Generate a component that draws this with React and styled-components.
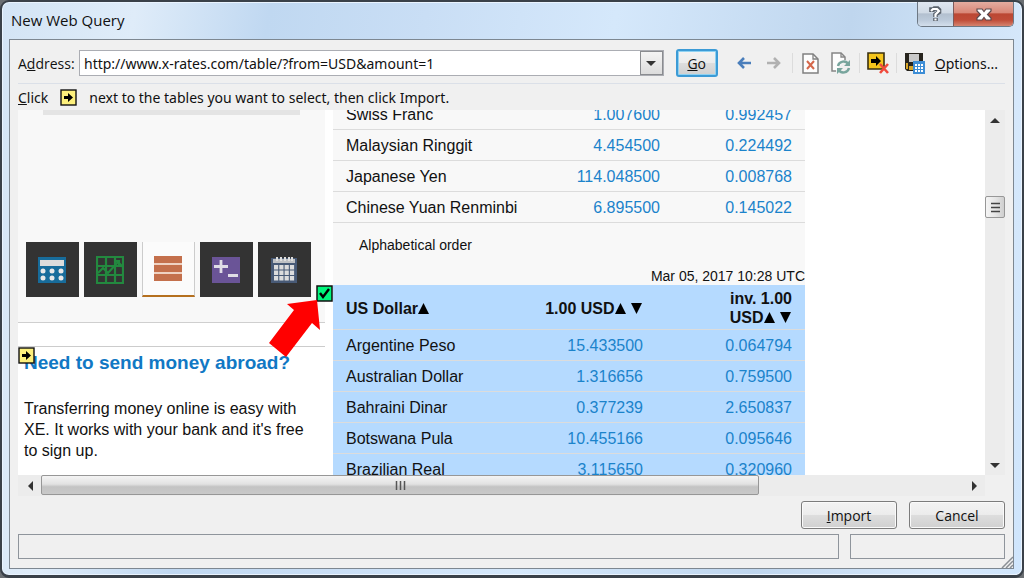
import React from 'react';
import styled, { createGlobalStyle, css } from 'styled-components';

const GlobalStyle = createGlobalStyle`
  * {
    box-sizing: border-box;
  }
  body {
    margin: 0;
    background: #6b6f73;
    font-family: "Noto Sans", "Open Sans", sans-serif;
    color: #111;
  }
`;

const Window = styled.div`
  height: 100vh;
  min-height: 420px;
  display: flex;
  flex-direction: column;
  padding: 0 8px 6px 7px;
  border: 2px solid #3a4149;
  border-bottom-width: 3px;
  border-radius: 9px;
  background: linear-gradient(100deg, #d3e4f5 0%, #dfecf9 12%, #c0d8f1 24%, #c9def5 38%, #d5e8fb 55%, #bfd6ee 76%, #d6e8fb 92%, #cfe5fc 100%);
  box-shadow: inset 0 0 0 1px #eaf4ff;
`;

const TitleBar = styled.header`
  display: flex;
  justify-content: space-between;
  align-items: flex-start;
  height: 37px;
`;

const Title = styled.h1`
  margin: 0;
  padding-left: 2px;
  font: 400 15px/36px "Open Sans", "Noto Sans", sans-serif;
`;

const Caption = styled.div`
  display: flex;
  height: 25px;
  border: 1px solid #6d7884;
  border-top: 0;
  border-radius: 0 0 5px 5px;
  overflow: hidden;
`;

const CaptionButton = styled.button`
  display: flex;
  align-items: center;
  justify-content: center;
  width: ${({ $close }) => ($close ? 60 : 35)}px;
  padding: 0;
  border: 0;
  border-left: ${({ $close }) => ($close ? '1px solid #7d5a5a' : '0')};
  background: ${({ $close }) =>
    $close
      ? 'linear-gradient(#e3aca0, #d98878 44%, #bb4733 50%, #c04c38 75%, #d5836f)'
      : 'linear-gradient(#dfe7f0, #d0dae5 44%, #b3c0cf 50%, #bccada 75%, #d3dfec)'};
`;

const Panel = styled.main`
  flex: 1;
  min-height: 0;
  position: relative;
  display: flex;
  flex-direction: column;
  padding: 9px 8px 9px;
  border: 1px solid #7d8791;
  background: #f0f0f0;
`;

const Toolbar = styled.div`
  display: flex;
  align-items: center;
  height: 28px;
  font-size: 14px;
`;

const AddressLabel = styled.label`
  width: 61px;
  font-family: "Open Sans", "Noto Sans", sans-serif;
`;

const Combo = styled.div`
  flex: 1;
  display: flex;
  height: 26px;
  border: 1px solid #abadb3;
  background: #fff;
`;

const Address = styled.input`
  flex: 1;
  min-width: 0;
  padding: 0 4px;
  border: 0;
  outline: 0;
  background: transparent;
  color: #111;
  font: 14px "Noto Sans", "Open Sans", sans-serif;
`;

const DropButton = styled.button`
  display: flex;
  align-items: center;
  justify-content: center;
  width: 23px;
  padding: 0;
  border: 1px solid #8a8c90;
  background: linear-gradient(#f4f4f4, #dcdcdc);
`;

const PushButton = styled.button`
  height: 28px;
  width: ${({ $go }) => ($go ? 42 : 96)}px;
  margin-left: ${({ $go }) => ($go ? 12 : 0)}px;
  padding: 0;
  border: ${({ $go }) => ($go ? '2px solid #3c9bd6' : '1px solid #7c7c7c')};
  border-radius: 3px;
  background: linear-gradient(#f3f3f3, #ececec 48%, #dddddd 52%, #d0d0d0);
  box-shadow: inset 0 0 0 1px ${({ $go }) => ($go ? '#8fd2f2' : '#fafafa')};
  color: #111;
  font: 14px "Open Sans", "Noto Sans", sans-serif;
`;

const Tools = styled.div`
  display: flex;
  align-items: center;
  padding-left: 11px;
`;

const ToolButton = styled.button`
  display: flex;
  align-items: center;
  justify-content: center;
  width: 30px;
  height: 28px;
  padding: 0;
  border: 0;
  background: none;
`;

const Separator = styled.span`
  width: 1px;
  height: 20px;
  margin: 0 3px;
  background: #dcdcdc;
`;

const OptionsButton = styled.button`
  height: 28px;
  padding: 0 7px 0 5px;
  border: 0;
  background: none;
  color: #111;
  font: 14px "Noto Sans", "Open Sans", sans-serif;
`;

const Hint = styled.p`
  display: flex;
  align-items: center;
  height: 27px;
  margin: 6px 0 0;
  border-top: 1px solid #dbe0e8;
  font-size: 14px;
  svg {
    margin: 0 12px;
  }
`;

const Browser = styled.div`
  flex: 1;
  min-height: 0;
  display: grid;
  grid-template-columns: minmax(0, 1fr) 20px;
  grid-template-rows: minmax(0, 1fr) 21px;
`;

const Page = styled.div`
  display: flex;
  align-items: flex-start;
  gap: 8px;
  overflow: hidden;
  background: #fff;
  font-family: "Liberation Sans", Arial, sans-serif;
  font-size: 16px;
`;

const Sidebar = styled.aside`
  flex: none;
  width: 307px;
`;

const ToolCard = styled.section`
  height: 213px;
  padding: 0 25px;
  border-bottom: 1px solid #cfcfcf;
  background: #f8f8f8;
`;

const AdEdge = styled.div`
  height: 5px;
  background: #e4e4e4;
`;

const IconRow = styled.nav`
  display: flex;
  gap: 5px;
  margin: 127px -17px 0;
`;

const IconTile = styled.a`
  display: flex;
  align-items: center;
  justify-content: center;
  width: 53px;
  height: 55px;
  padding-right: 2px;
  background: #333;
  ${({ $active }) =>
    $active &&
    css`
      border: 1px solid #ccc;
      border-top: 0;
      border-bottom: 2px solid #b5701f;
      background: #fbfbfb;
    `}
`;

const Promo = styled.section`
  position: relative;
  margin-top: 23px;
  padding: 5px 8px 0 6px;
  border-top: 1px solid #ccc;
`;

const PromoTitle = styled.h2`
  margin: 0;
  color: #1178c4;
  font-size: 19px;
  line-height: 22px;
  white-space: nowrap;
`;

const PromoText = styled.p`
  margin: 24px 0 0;
  line-height: 21px;
`;

const PromoMark = styled.span`
  position: absolute;
  top: 0;
  left: 0;
  line-height: 0;
`;

const Rates = styled.section`
  position: relative;
  flex: none;
  width: 472px;
  margin-top: -11px;
  background: #f8f8f8;
`;

const RateTable = styled.table`
  width: 100%;
  border-collapse: separate;
  border-spacing: 0;
  table-layout: fixed;
  background: ${({ $selected }) => ($selected ? '#b5daff' : '#f8f8f8')};
  td,
  th {
    height: 31px;
    padding: 2px 13px 0 13px;
    border-bottom: 1px solid #dcdcdc;
    text-align: right;
    white-space: nowrap;
  }
  td:first-child,
  th:first-child {
    text-align: left;
  }
  th {
    height: 45px;
    line-height: 19px;
    white-space: normal;
  }
`;

const RateLink = styled.a`
  color: #1b83cb;
  text-decoration: none;
`;

const ListIntro = styled.div`
  display: flex;
  flex-direction: column;
  justify-content: space-between;
  height: 62px;
  padding-top: 13px;
  font-size: 14px;
  line-height: 18px;
`;

const ListName = styled.span`
  padding-left: 26px;
`;

const Stamp = styled.time`
  text-align: right;
`;

const TableMark = styled.label`
  position: absolute;
  top: 186px;
  left: -17px;
  width: 17px;
  height: 17px;
  line-height: 0;
  input {
    position: absolute;
    inset: 0;
    margin: 0;
    opacity: 0;
  }
`;

const Pointer = styled.svg`
  position: absolute;
  top: 194px;
  left: -65px;
`;

const ScrollBar = styled.div`
  display: flex;
  flex-direction: ${({ $vertical }) => ($vertical ? 'column' : 'row')};
  align-items: stretch;
  background: #ececec;
`;

const ScrollArrow = styled.button`
  flex: none;
  display: flex;
  align-items: center;
  justify-content: center;
  width: ${({ $small }) => ($small ? 20 : 23)}px;
  height: 21px;
  padding: 0;
  border: 0;
  background: none;
`;

const ScrollTrack = styled.div`
  flex: 1;
  display: flex;
  flex-direction: ${({ $vertical }) => ($vertical ? 'column' : 'row')};
  padding-top: ${({ $vertical }) => ($vertical ? '65px' : '0')};
`;

const Thumb = styled.div`
  display: flex;
  align-items: center;
  justify-content: center;
  width: ${({ $vertical }) => ($vertical ? '20px' : '78%')};
  height: ${({ $vertical }) => ($vertical ? '22px' : '20px')};
  border: 1px solid #979797;
  border-radius: 2px;
  background: ${({ $vertical }) =>
    $vertical ? 'linear-gradient(90deg, #f5f5f5, #e6e6e6 50%, #cfcfcf)' : 'linear-gradient(#f4f4f4, #e2e2e2 45%, #c3c3c3 60%, #c9c9c9)'};
`;

const Actions = styled.div`
  display: flex;
  justify-content: flex-end;
  gap: 12px;
  margin: 5px 0 5px;
`;

const StatusRow = styled.footer`
  display: flex;
  gap: 11px;
`;

const StatusBox = styled.div`
  flex: ${({ $small }) => ($small ? '0 0 155px' : '1')};
  height: 25px;
  border: 1px solid #8f959c;
`;

const Grip = styled.svg`
  position: absolute;
  right: 0;
  bottom: 0;
`;

const topRates = [
  ['Swiss Franc', '1.007600', '0.992457'],
  ['Malaysian Ringgit', '4.454500', '0.224492'],
  ['Japanese Yen', '114.048500', '0.008768'],
  ['Chinese Yuan Renminbi', '6.895500', '0.145022'],
];

const allRates = [
  ['Argentine Peso', '15.433500', '0.064794'],
  ['Australian Dollar', '1.316656', '0.759500'],
  ['Bahraini Dinar', '0.377239', '2.650837'],
  ['Botswana Pula', '10.455166', '0.095646'],
  ['Brazilian Real', '3.115650', '0.320960'],
];

const MarkIcon = () => (
  <svg width="17" height="17" viewBox="0 0 17 17">
    <rect x="1" y="1" width="15" height="15" fill="#fdf07c" stroke="#111" strokeWidth="1.4" />
    <path d="M4 7h4V4l5 4.500-5 4.500v-3H4z" fill="#000" />
  </svg>
);

const CalculatorIcon = () => (
  <svg width="28" height="26" viewBox="0 0 28 26">
    <path d="M0 0h28v26H0z" fill="#176c9b" />
    <path d="M2 3h24v6H2z" fill="#dcdcdc" />
    {[5, 14, 23].map((x) => [14, 21].map((y) => <circle key={`${x}-${y}`} cx={x} cy={y} r="2.500" fill="#e8e8e8" />))}
  </svg>
);

const GraphIcon = () => (
  <svg width="28" height="28" viewBox="0 0 28 28" fill="none" stroke="#23893f">
    <path d="M1 1h26v26H1zM10 1v26M19 1v26M1 10h26M1 19h26" strokeWidth="2.200" />
    <path d="M2 17l5-5 5 5 10-11M18 5h5v5M22 6l5 5" strokeWidth="2.200" />
  </svg>
);

const TableIcon = () => (
  <svg width="28" height="26" viewBox="0 0 28 26">
    <path d="M0 0h28v25H0z" fill="#efd2c2" />
    <path d="M0 0h28v7H0zM0 9h28v7H0zM0 18h28v7H0z" fill="#c4704c" />
  </svg>
);

const PlusMinusIcon = () => (
  <svg width="28" height="26" viewBox="0 0 28 26">
    <path d="M0 0h28v26H0z" fill="#6a5497" />
    <path d="M9 3v13M2 9.500h14M16 18.500h10" fill="none" stroke="#e0dde6" strokeWidth="2.800" />
  </svg>
);

const CalendarIcon = () => (
  <svg width="26" height="26" viewBox="0 0 26 26">
    <path d="M0 1h26v25H0z" fill="#485a76" />
    <path d="M2 2h22v4H2z" fill="#bfc1c4" />
    <path d="M6 0v4M10 0v4M14 0v4M18 0v4M21 0v4" stroke="#dedede" strokeWidth="2" />
    {[3, 8.300, 13.600, 18.900].map((x) => [8, 13.500, 19].map((y) => <rect key={`${x}-${y}`} x={x} y={y} width="4.200" height="4.500" fill="#dcdcdc" />))}
  </svg>
);

const ArrowIcon = ({ color, forward }) => (
  <svg width="14" height="12" viewBox="0 0 14 12" fill="none" stroke={color} strokeWidth="2.600">
    <path d={forward ? 'M0 6h12M7 1l5 5-5 5' : 'M14 6H2M7 1L2 6l5 5'} />
  </svg>
);

const StopPageIcon = () => (
  <svg width="17" height="21" viewBox="0 0 17 21" fill="none">
    <path d="M1 1h10l5 5v14H1z" fill="#fdfdfd" stroke="#808080" strokeWidth="1.500" />
    <path d="M11 1v5h5" stroke="#808080" strokeWidth="1.300" />
    <path d="M5 8l7 8M12 8l-7 8" stroke="#d5674a" strokeWidth="2" />
  </svg>
);

const RefreshPageIcon = () => (
  <svg width="20" height="22" viewBox="0 0 20 22" fill="none">
    <path d="M5 19H1V1h9l4 4v3" fill="#fdfdfd" stroke="#858585" strokeWidth="1.500" />
    <path d="M10 1v4h4" stroke="#858585" strokeWidth="1.300" />
    <path d="M7 14c1-5 8-6 10-2M18 16c-1 5-8 6-10 2" stroke="#78a59d" strokeWidth="2.400" />
    <path d="M19 8v6h-6zM6 22v-6h6z" fill="#78a59d" />
  </svg>
);

const HideMarksIcon = () => (
  <svg width="22" height="22" viewBox="0 0 22 22" fill="none">
    <path d="M1 1h16v16H1z" fill="#f5c51c" stroke="#3a3010" strokeWidth="1.600" />
    <path d="M4 7h5V4l5 5-5 5v-3H4z" fill="#000" />
    <path d="M13 12l8 9M21 12l-8 9" stroke="#f04a3c" strokeWidth="2.600" />
  </svg>
);

const SaveQueryIcon = () => (
  <svg width="20" height="21" viewBox="0 0 20 21">
    <path d="M0 0h18v18H2l-2-2z" fill="#27241e" />
    <path d="M4 1h10v8H4z" fill="#c9c9c9" />
    <path d="M1 10h2v6H1zM4 13h4v4H4z" fill="#d8a62a" />
    <path d="M8 8h12v13H8z" fill="#3e8ed6" />
    <path d="M10 11h8v8h-8z" fill="#fff" />
    <path d="M12.500 11v8M15.500 11v8M10 13.500h8M10 16.500h8" stroke="#3e8ed6" />
  </svg>
);

const Triangle = ({ d }) => (
  <svg width="10" height="10" viewBox="0 0 10 10">
    <path d={d} fill="#333" />
  </svg>
);

const SortIcon = ({ down }) => (
  <svg width="12" height="11" viewBox="0 0 12 11">
    <path d={down ? 'M0 0h11L5.500 11z' : 'M0 11h11L5.500 0z'} fill="#000" />
  </svg>
);

const RateRows = ({ rates }) =>
  rates.map(([name, value, inverse]) => (
    <tr key={name}>
      <td>{name}</td>
      <td>
        <RateLink href="#">{value}</RateLink>
      </td>
      <td>
        <RateLink href="#">{inverse}</RateLink>
      </td>
    </tr>
  ));

const App = () => {
  return (
    <>
      <GlobalStyle />
      <Window>
        <TitleBar>
          <Title>New Web Query</Title>
          <Caption>
            <CaptionButton aria-label="Help">
              <svg width="13" height="16" viewBox="0 0 13 16" fill="none">
                <path d="M2.500 6V3.500h2l1-1h3l1.500 1.500v2L6.500 8.500v2.500M6.500 12v3" stroke="#59616b" strokeWidth="4.600" />
                <path d="M2 5l2-2h4l2 2-3.500 3.500V11M6.500 12.500v2" stroke="#fff" strokeWidth="2.200" />
              </svg>
            </CaptionButton>
            <CaptionButton $close aria-label="Close">
              <svg width="16" height="13" viewBox="0 0 16 13">
                <path d="M1 1h5l2 2.500L10 1h5v2l-3.500 3.500L15 10v2h-5L8 9.500 6 12H1v-2l3.500-3.500L1 3z" fill="#fff" stroke="#5b4a4e" strokeWidth="1.200" />
              </svg>
            </CaptionButton>
          </Caption>
        </TitleBar>
        <Panel>
          <Toolbar>
            <AddressLabel htmlFor="address">
              A<u>d</u>dress:
            </AddressLabel>
            <Combo>
              <Address id="address" type="text" defaultValue="http://www.x-rates.com/table/?from=USD&amount=1" />
              <DropButton aria-label="Show addresses">
                <Triangle d="M0 3h10L5 8z" />
              </DropButton>
            </Combo>
            <PushButton $go>
              <u>G</u>o
            </PushButton>
            <Tools>
              <ToolButton aria-label="Back"><ArrowIcon color="#4a7ebb" /></ToolButton>
              <ToolButton aria-label="Forward"><ArrowIcon color="#b1b1b1" forward /></ToolButton>
              <Separator />
              <ToolButton aria-label="Stop"><StopPageIcon /></ToolButton>
              <ToolButton aria-label="Refresh"><RefreshPageIcon /></ToolButton>
              <Separator />
              <ToolButton aria-label="Hide icons"><HideMarksIcon /></ToolButton>
              <Separator />
              <ToolButton aria-label="Save query"><SaveQueryIcon /></ToolButton>
              <OptionsButton>
                <u>O</u>ptions...
              </OptionsButton>
            </Tools>
          </Toolbar>
          <Hint>
            <u>C</u>lick
            <MarkIcon />
            next to the tables you want to select, then click Import.
          </Hint>
          <Browser>
            <Page>
              <Sidebar>
                <ToolCard>
                  <AdEdge />
                  <IconRow>
                    <IconTile href="#" aria-label="Calculator"><CalculatorIcon /></IconTile>
                    <IconTile href="#" aria-label="Graph"><GraphIcon /></IconTile>
                    <IconTile href="#" aria-label="Rates table" $active><TableIcon /></IconTile>
                    <IconTile href="#" aria-label="Monthly average"><PlusMinusIcon /></IconTile>
                    <IconTile href="#" aria-label="Historic lookup"><CalendarIcon /></IconTile>
                  </IconRow>
                </ToolCard>
                <Promo>
                  <PromoTitle>Need to send money abroad?</PromoTitle>
                  <PromoText>Transferring money online is easy with XE. It works with your bank and it's free to sign up.</PromoText>
                  <PromoMark><MarkIcon /></PromoMark>
                </Promo>
              </Sidebar>
              <Rates>
                <RateTable>
                  <colgroup>
                    <col />
                    <col width="130" />
                    <col width="132" />
                  </colgroup>
                  <tbody>
                    <RateRows rates={topRates} />
                  </tbody>
                </RateTable>
                <ListIntro>
                  <ListName>Alphabetical order</ListName>
                  <Stamp>Mar 05, 2017 10:28 UTC</Stamp>
                </ListIntro>
                <RateTable $selected>
                  <colgroup>
                    <col />
                    <col width="130" />
                    <col width="149" />
                  </colgroup>
                  <thead>
                    <tr>
                      <th>US Dollar<SortIcon /></th>
                      <th>1.00 USD<SortIcon /> <SortIcon down /></th>
                      <th>inv. 1.00<br />USD<SortIcon /> <SortIcon down /></th>
                    </tr>
                  </thead>
                  <tbody>
                    <RateRows rates={allRates} />
                  </tbody>
                </RateTable>
                <TableMark>
                  <input type="checkbox" defaultChecked aria-label="Select table" />
                  <svg width="17" height="17" viewBox="0 0 17 17">
                    <rect x="1" y="1" width="15" height="15" fill="#00f67c" stroke="#111" strokeWidth="1.500" />
                    <path d="M4 8l3 4 6-8" fill="none" stroke="#000" strokeWidth="2.400" />
                  </svg>
                </TableMark>
                <Pointer width="54" height="66" viewBox="0 0 54 66">
                  <path d="M49 7L19 11l7 6L1 50l17 14 26-34 8 7z" fill="#f00" />
                </Pointer>
              </Rates>
            </Page>
            <ScrollBar $vertical>
              <ScrollArrow $small aria-label="Scroll up"><Triangle d="M0 7h10L5 2z" /></ScrollArrow>
              <ScrollTrack $vertical>
                <Thumb $vertical>
                  <svg width="9" height="11" viewBox="0 0 9 11">
                    <path d="M0 1.500h9M0 5.500h9M0 9.500h9" stroke="#444" strokeWidth="1.500" />
                  </svg>
                </Thumb>
              </ScrollTrack>
              <ScrollArrow $small aria-label="Scroll down"><Triangle d="M0 3h10L5 8z" /></ScrollArrow>
            </ScrollBar>
            <ScrollBar>
              <ScrollArrow aria-label="Scroll left"><Triangle d="M8 0v10L3 5z" /></ScrollArrow>
              <ScrollTrack>
                <Thumb>
                  <svg width="11" height="9" viewBox="0 0 11 9">
                    <path d="M1.500 0v9M5.500 0v9M9.500 0v9" stroke="#555" strokeWidth="1.500" />
                  </svg>
                </Thumb>
              </ScrollTrack>
              <ScrollArrow aria-label="Scroll right"><Triangle d="M3 0v10l5-5z" /></ScrollArrow>
            </ScrollBar>
          </Browser>
          <Actions>
            <PushButton><u>I</u>mport</PushButton>
            <PushButton>Cancel</PushButton>
          </Actions>
          <StatusRow>
            <StatusBox />
            <StatusBox $small />
          </StatusRow>
          <Grip width="12" height="12" viewBox="0 0 12 12">
            <path d="M1 12L12 1M5 12l7-7M9 12l3-3" stroke="#8a8f95" strokeWidth="1.500" />
          </Grip>
        </Panel>
      </Window>
    </>
  );
};

export default App;
